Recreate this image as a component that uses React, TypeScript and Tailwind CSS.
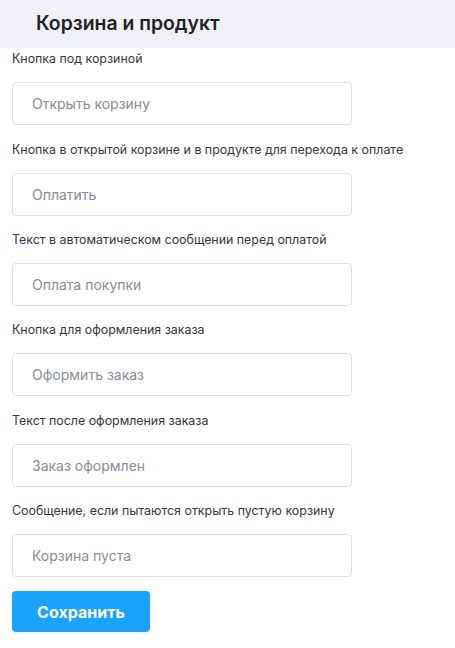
import React from "react";

const fields = [
  { label: "Кнопка под корзиной", value: "Открыть корзину", after: "h-[17px]" },
  { label: "Кнопка в открытой корзине и в продукте для перехода к оплате", value: "Оплатить", after: "h-[16px]" },
  { label: "Текст в автоматическом сообщении перед оплатой", value: "Оплата покупки", after: "h-[16px]" },
  { label: "Кнопка для оформления заказа", value: "Оформить заказ", after: "h-[17px]" },
  { label: "Текст после оформления заказа", value: "Заказ оформлен", after: "h-[16px]" },
  { label: "Сообщение, если пытаются открыть пустую корзину", value: "Корзина пуста", after: "h-[14px]" },
];

export default function App() {
  return (
    <div className="w-[455px] h-[648px] bg-white font-['Inter',sans-serif]">
      <div className="h-[48px] bg-[#f0f1f6] flex items-center pl-[36px]">
        <h1 className="text-[19.4px] font-semibold text-[#1f2329] leading-none">Корзина и продукт</h1>
      </div>
      <div className="px-[12px] pt-[3px]">
        {fields.map((f, i) => (
          <div key={i} className="flex flex-col">
            <div className="text-[12.4px] leading-[16px] text-[#333640]">{f.label}</div>
            <div className="mt-[15px] w-[340px] h-[43px] border border-[#dcdee3] rounded-[4px] flex items-center pl-[19px] text-[14px] text-[#878c96]">
              {f.value}
            </div>
            <div className={f.after} />
          </div>
        ))}
        <button className="w-[138px] h-[41px] bg-[#1aa3ff] rounded-[4px] text-white text-[16px] font-bold">
          Сохранить
        </button>
      </div>
    </div>
  );
}
